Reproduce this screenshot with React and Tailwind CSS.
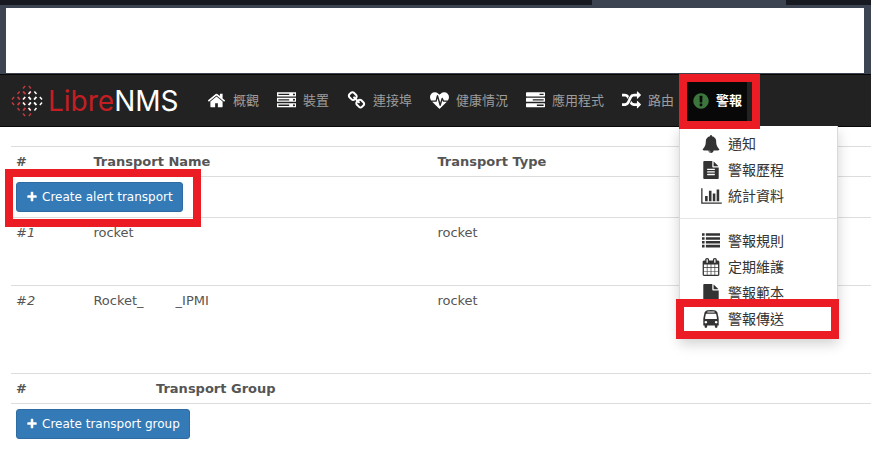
import React from 'react'
import clsx from 'clsx'

const icons = {
  home: 'M1472 992v480q0 26-19 45t-45 19h-384v-384h-256v384h-384q-26 0-45-19t-19-45v-480q0-1 .5-3t.5-3l575-474 575 474q1 2 1 6zm223-69l-62 74q-8 9-21 11h-3q-13 0-21-7l-692-577-692 577q-12 8-24 7-13-2-21-11l-62-74q-8-10-7-23.5t11-21.5l719-599q32-26 76-26t76 26l244 204v-195q0-14 9-23t23-9h192q14 0 23 9t9 23v408l219 182q10 8 11 21.5t-7 23.5z',
  server: 'M128 1408h1024v-128h-1024v128zm0-512h1024v-128h-1024v128zm1568 448q0-40-28-68t-68-28-68 28-28 68 28 68 68 28 68-28 28-68zm-1568-960h1024v-128h-1024v128zm1568 448q0-40-28-68t-68-28-68 28-28 68 28 68 68 28 68-28 28-68zm0-512q0-40-28-68t-68-28-68 28-28 68 28 68 68 28 68-28 28-68zm96 832v384h-1792v-384h1792zm0-512v384h-1792v-384h1792zm0-512v384h-1792v-384h1792z',
  link: 'M1520 1216q0-40-28-68l-208-208q-28-28-68-28-42 0-72 32 3 3 19 18.5t21.5 21.5 15 19 13 25.5 3.5 27.5q0 40-28 68t-68 28q-15 0-27.5-3.5t-25.5-13-19-15-21.5-21.5-18.5-19q-33 31-33 73 0 40 28 68l206 207q27 27 68 27 40 0 68-26l147-146q28-28 28-67zm-703-705q0-40-28-68l-206-207q-28-28-68-28-39 0-68 27l-147 146q-28 28-28 67 0 40 28 68l208 208q27 27 68 27 42 0 72-31-3-3-19-18.5t-21.5-21.5-15-19-13-25.5-3.5-27.5q0-40 28-68t68-28q15 0 27.5 3.5t25.5 13 19 15 21.5 21.5 18.5 19q33-31 33-73zm895 705q0 120-85 203l-147 146q-83 83-203 83-121 0-204-85l-206-207q-83-83-83-203 0-123 88-209l-88-88q-86 88-208 88-120 0-204-84l-208-208q-84-84-84-204t85-203l147-146q83-83 203-83 121 0 204 85l206 207q83 83 83 203 0 123-88 209l88 88q86-88 208-88 120 0 204 84l208 208q84 84 84 204z',
  heartbeat: 'M1280 1024h305q-5 6-10 10.5t-9 7.5l-3 4-623 600q-18 18-44 18t-44-18l-624-602q-5-2-21-20h369q22 0 39.5-13.5t22.5-34.5l70-281 190 667q6 20 23 33t39 13q21 0 38-13t23-33l146-485 56 112q18 35 57 35zm512-428q0 145-103 300h-369l-111-221q-8-17-25.5-27t-36.5-8q-45 5-56 46l-129 430-196-686q-6-20-23.5-33t-39.5-13-39 13.5-22 34.5l-116 464h-423q-103-155-103-300 0-220 127-344t351-124q62 0 126.5 21.5t120 58 95.5 68.5 76 68q36-36 76-68t95.5-68.5 120-58 126.5-21.5q224 0 351 124t127 344z',
  tasks: 'M1024 1408h640v-128h-640v128zm-384-512h1024v-128h-1024v128zm640-512h384v-128h-384v128zm512 832v256q0 26-19 45t-45 19h-1664q-26 0-45-19t-19-45v-256q0-26 19-45t45-19h1664q26 0 45 19t19 45zm0-512v256q0 26-19 45t-45 19h-1664q-26 0-45-19t-19-45v-256q0-26 19-45t45-19h1664q26 0 45 19t19 45zm0-512v256q0 26-19 45t-45 19h-1664q-26 0-45-19t-19-45v-256q0-26 19-45t45-19h1664q26 0 45 19t19 45z',
  random: 'M666 481q-60 92-137 273-22-45-37-72.5t-40.5-63.5-51-56.5-63-35-81.5-14.5h-224q-14 0-23-9t-9-23v-192q0-14 9-23t23-9h224q250 0 410 225zm1126 799q0 14-9 23l-320 320q-9 9-23 9-13 0-22.5-9.5t-9.5-22.5v-192q-32 0-85 .5t-81 1-73-1-71-5-64-10.5-63-18.5-58-28.5-59-40-55-53.5-56-69.5q59-93 136-273 22 45 37 72.5t40.5 63.5 51 56.5 63 35 81.5 14.5h256v-192q0-14 9-23t23-9q12 0 24 10l319 319q9 9 9 23zm0-896q0 14-9 23l-320 320q-9 9-23 9-13 0-22.5-9.5t-9.5-22.5v-192h-256q-48 0-87 15t-69 45-51 61.5-45 77.5q-32 62-78 171-29 66-49.5 111t-54 105-64 100-74 83-90 68.5-106.5 42-128 16.5h-224q-14 0-23-9t-9-23v-192q0-14 9-23t23-9h224q48 0 87-15t69-45 51-61.5 45-77.5q32-62 78-171 29-66 49.5-111t54-105 64-100 74-83 90-68.5 106.5-42 128-16.5h256v-192q0-14 9-23t23-9q12 0 24 10l319 319q9 9 9 23z',
  alert: 'M896 128q209 0 385.5 103t279.5 279.5 103 385.5-103 385.5-279.5 279.5-385.5 103-385.5-103-279.5-279.5-103-385.5 103-385.5 279.5-279.5 385.5-103zm128 1247v-190q0-14-9-23.5t-22-9.5h-192q-13 0-23 10t-10 23v190q0 13 10 23t23 10h192q13 0 22-9.5t9-23.5zm-2-344l18-621q0-12-10-18-10-8-24-8h-220q-14 0-24 8-10 6-10 18l17 621q0 10 10 17.5t24 7.5h185q14 0 23.5-7.5t10.5-17.5z',
  bell: 'M912 1696q0-16-16-16-59 0-101.5-42.5t-42.5-101.5q0-16-16-16t-16 16q0 73 51.5 124.5t124.5 51.5q16 0 16-16zm816-288q0 52-38 90t-90 38h-448q0 106-75 181t-181 75-181-75-75-181h-448q-52 0-90-38t-38-90q50-42 91-88t85-119.5 74.5-158.5 50-206 19.5-260q0-152 117-282.5t307-158.5q-8-19-8-39 0-40 28-68t68-28 68 28 28 68q0 20-8 39 190 28 307 158.5t117 282.5q0 139 19.5 260t50 206 74.5 158.5 85 119.5 91 88z',
  fileText: 'M1596 476q14 14 28 36h-472v-472q22 14 36 28zm-476 164h544v1056q0 40-28 68t-68 28h-1344q-40 0-68-28t-28-68v-1600q0-40 28-68t68-28h800v544q0 40 28 68t68 28zm160 736v-64q0-14-9-23t-23-9h-704q-14 0-23 9t-9 23v64q0 14 9 23t23 9h704q14 0 23-9t9-23zm0-256v-64q0-14-9-23t-23-9h-704q-14 0-23 9t-9 23v64q0 14 9 23t23 9h704q14 0 23-9t9-23zm0-256v-64q0-14-9-23t-23-9h-704q-14 0-23 9t-9 23v64q0 14 9 23t23 9h704q14 0 23-9t9-23z',
  chart: 'M640 896v512h-256v-512h256zm384-512v1024h-256v-1024h256zm1024 1152v128h-2048v-1536h128v1408h1920zm-640-896v768h-256v-768h256zm384-384v1152h-256v-1152h256z',
  list: 'M0 1280h256v256h-256zM0 896h256v256h-256zM0 512h256v256h-256zM0 128h256v256h-256zM384 1280h1408v256h-1408zM384 896h1408v256h-1408zM384 512h1408v256h-1408zM384 128h1408v256h-1408z',
  calendar: 'M192 1664h288v-288h-288v288zm352 0h320v-288h-320v288zm-352-352h288v-320h-288v320zm352 0h320v-320h-320v320zm-352-384h288v-288h-288v288zm736 736h320v-288h-320v288zm-384-736h320v-288h-320v288zm768 736h288v-288h-288v288zm-384-352h320v-320h-320v320zm-352-864v-288q0-13-9.5-22.5t-22.5-9.5h-64q-13 0-22.5 9.5t-9.5 22.5v288q0 13 9.5 22.5t22.5 9.5h64q13 0 22.5-9.5t9.5-22.5zm736 864h288v-320h-288v320zm-384-384h320v-288h-320v288zm384 0h288v-288h-288v288zm32-480v-288q0-13-9.5-22.5t-22.5-9.5h-64q-13 0-22.5 9.5t-9.5 22.5v288q0 13 9.5 22.5t22.5 9.5h64q13 0 22.5-9.5t9.5-22.5zm384-64v1280q0 52-38 90t-90 38h-1408q-52 0-90-38t-38-90v-1280q0-52 38-90t90-38h128v-96q0-66 47-113t113-47h64q66 0 113 47t47 113v96h384v-96q0-66 47-113t113-47h64q66 0 113 47t47 113v96h128q52 0 90 38t38 90z',
  file: 'M1152 512v-472q22 14 36 28l408 408q14 14 28 36h-472zm-128 32q0 40 28 68t68 28h544v1056q0 40-28 68t-68 28h-1344q-40 0-68-28t-28-68v-1600q0-40 28-68t68-28h800v544z',
  bus: 'M512 1216q0-53-37.5-90.5t-90.5-37.5-90.5 37.5-37.5 90.5 37.5 90.5 90.5 37.5 90.5-37.5 37.5-90.5zm1024 0q0-53-37.5-90.5t-90.5-37.5-90.5 37.5-37.5 90.5 37.5 90.5 90.5 37.5 90.5-37.5 37.5-90.5zm-46-396l-72-384q-5-23-22.5-37.5t-40.5-14.5h-918q-23 0-40.5 14.5t-22.5 37.5l-72 384q-5 30 14 53t49 23h1062q30 0 49-23t14-53zm-226-612q0-20-14-34t-34-14h-640q-20 0-34 14t-14 34 14 34 34 14h640q20 0 34-14t14-34zm400 725v603h-128v128q0 53-37.5 90.5t-90.5 37.5-90.5-37.5-37.5-90.5v-128h-768v128q0 53-37.5 90.5t-90.5 37.5-90.5-37.5-37.5-90.5v-128h-128v-603q0-112 25-223l103-454q9-78 97.5-137t230-89 312.5-30 312.5 30 230 89 97.5 137l105 454q23 102 23 223z',
  plus: 'M1600 736v192q0 40-28 68t-68 28h-416v416q0 40-28 68t-68 28h-192q-40 0-68-28t-28-68v-416h-416q-40 0-68-28t-28-68v-192q0-40 28-68t68-28h416v-416q0-40 28-68t68-28h192q40 0 68 28t28 68v416h416q40 0 68 28t28 68z'
}

const navItems = [
  { icon: 'home', label: '概觀' },
  { icon: 'server', label: '裝置' },
  { icon: 'link', label: '連接埠' },
  { icon: 'heartbeat', label: '健康情況' },
  { icon: 'tasks', label: '應用程式' },
  { icon: 'random', label: '路由' }
]

const alertMenu = [
  [
    { icon: 'bell', label: '通知' },
    { icon: 'fileText', label: '警報歷程' },
    { icon: 'chart', label: '統計資料' }
  ],
  [
    { icon: 'list', label: '警報規則' },
    { icon: 'calendar', label: '定期維護' },
    { icon: 'file', label: '警報範本' },
    { icon: 'bus', label: '警報傳送', marked: true }
  ]
]

const rings = [
  { x: 17, y: 6, color: '#c0393d' },
  { x: 11.5, y: 11.5, color: '#c0393d' },
  { x: 6, y: 17, color: '#c0393d' },
  { x: 11.5, y: 22.5, color: '#c0393d' },
  { x: 17, y: 28, color: '#c0393d' },
  { x: 22.5, y: 11.5, color: '#fff' },
  { x: 17, y: 17, color: '#fff' },
  { x: 28, y: 17, color: '#fff' },
  { x: 22.5, y: 22.5, color: '#fff' }
]

function Icon({ name, className }) {
  const wide = name === 'chart'
  return (
    <svg viewBox={wide ? '0 0 2048 1792' : '0 0 1792 1792'} className={clsx('shrink-0', className)} fill="currentColor" aria-hidden="true">
      <path d={icons[name]} />
    </svg>
  )
}

function Marker({ className }) {
  return <span className={clsx('absolute z-30 border-8 border-[#ec1c24] pointer-events-none', className)} />
}

// diamond lattice of dashed rings, neighbours share a dash
function Logo() {
  return (
    <svg viewBox="0 0 34 34" className="w-[34px] h-[34px] shrink-0" fill="none" strokeWidth="1.5" aria-hidden="true">
      {rings.map(r => (
        <path
          key={`${r.x}-${r.y}`}
          transform={`translate(${r.x} ${r.y})`}
          stroke={r.color}
          d="M-4 -1.6L-1.9 -4M1.9 -4L4 -1.6M4 1.6L1.9 4M-1.9 4L-4 1.6"
        />
      ))}
    </svg>
  )
}

function AlertMenu() {
  return (
    <div className="absolute right-0 top-full left-[-8px] z-20 w-[159px] bg-white border border-black/15 border-t-0 py-[5px] shadow-[0_6px_12px_rgba(0,0,0,0.18)]">
      {alertMenu.map((group, i) => (
        <ul key={i} className={clsx(i > 0 && 'mt-[9px] pt-[9px] border-t border-[#e5e5e5]')}>
          {group.map(item => (
            <li key={item.label} className="relative">
              <a href="#" className="flex items-center h-[26px] pl-5 gap-[6px] text-sm text-[#333]">
                <span className="flex w-[22px] justify-center">
                  <Icon name={item.icon} className={item.icon === 'chart' ? 'w-[21px] h-[18px]' : 'w-[18px] h-[18px]'} />
                </span>
                {item.label}
              </a>
              {item.marked && <Marker className="-left-1 -right-[2px] -inset-y-[7px]" />}
            </li>
          ))}
        </ul>
      ))}
    </div>
  )
}

function Navbar() {
  return (
    <nav className="flex h-[53px] bg-[#222] border-y border-[#080808] pl-[10px]">
      <a href="#" className="flex items-center w-[197px] gap-1 shrink-0 font-['Inter'] text-[28px] text-[#c41e24]">
        <Logo />
        <span>Libre<span className="text-white">NMS</span></span>
      </a>
      <ul className="flex text-[13px] whitespace-nowrap">
        {navItems.map(item => (
          <li key={item.label} className="mr-[18px]">
            <a href="#" className="flex items-center h-full gap-[7px] text-[#9d9d9d]">
              <Icon name={item.icon} className="w-[19px] h-[19px] text-white" />
              {item.label}
            </a>
          </li>
        ))}
        <li className="relative -ml-[5px]">
          <a href="#" className="flex items-center h-full px-[5px] gap-[6px] bg-[#080808] text-white font-bold">
            <Icon name="alert" className="w-[18px] h-[18px] text-[#3c763d]" />
            警報
          </a>
          <Marker className="-left-2 -right-[13px] -top-px -bottom-[3px]" />
          <AlertMenu />
        </li>
      </ul>
    </nav>
  )
}

function CreateButton({ children }) {
  return (
    <button type="button" className="flex items-center h-[30px] gap-1 px-[9px] rounded-[3px] border border-[#2e6da4] bg-[#337ab7] text-white text-xs">
      <Icon name="plus" className="w-3 h-3" />
      {children}
    </button>
  )
}

const th = 'border-t border-[#ddd] p-[5px] text-left font-bold leading-[19px]'
const td = 'border-t border-[#ddd] p-[5px] align-top leading-[19px]'

export default function App() {
  return (
    <div className="bg-white font-['DejaVu_Sans','Noto_Sans_CJK_TC',sans-serif] text-[#555]">
      <div className="flex h-[5px] bg-[#171a20]">
        <div className="w-[68%]"></div>
        <div className="w-[194px] bg-[#3b4450]"></div>
      </div>
      <div className="bg-[#3b4450] pt-[3px] pb-px pl-[6px] pr-[7px]">
        <div className="h-[65px] bg-white"></div>
      </div>
      <Navbar />
      <main className="pt-[19px] pl-[11px] text-[13px]">
        <table className="w-full table-fixed border-separate border-spacing-0 mb-5">
          <thead>
            <tr>
              <th className={clsx(th, 'w-[9%]')}>#</th>
              <th className={clsx(th, 'w-[40%]')}>Transport Name</th>
              <th className={th}>Transport Type</th>
            </tr>
          </thead>
          <tbody>
            <tr>
              <td className={td} colSpan={3}>
                <div className="relative w-fit">
                  <CreateButton>Create alert transport</CreateButton>
                  <Marker className="-left-[11px] -right-[18px] -top-[13px] -bottom-[15px]" />
                </div>
              </td>
            </tr>
            <tr>
              <td className={clsx(td, 'h-[68px] italic')}>#1</td>
              <td className={td}>rocket</td>
              <td className={td}>rocket</td>
            </tr>
            <tr>
              <td className={clsx(td, 'h-[68px] italic')}>#2</td>
              <td className={td}>
                Rocket_<span className="inline-block w-8"></span>_IPMI
              </td>
              <td className={td}>rocket</td>
            </tr>
          </tbody>
        </table>
        <table className="w-full table-fixed border-separate border-spacing-0">
          <thead>
            <tr>
              <th className={clsx(th, 'w-[140px]')}>#</th>
              <th className={th}>Transport Group</th>
            </tr>
          </thead>
          <tbody>
            <tr>
              <td className={td} colSpan={2}>
                <CreateButton>Create transport group</CreateButton>
              </td>
            </tr>
          </tbody>
        </table>
      </main>
    </div>
  )
}
